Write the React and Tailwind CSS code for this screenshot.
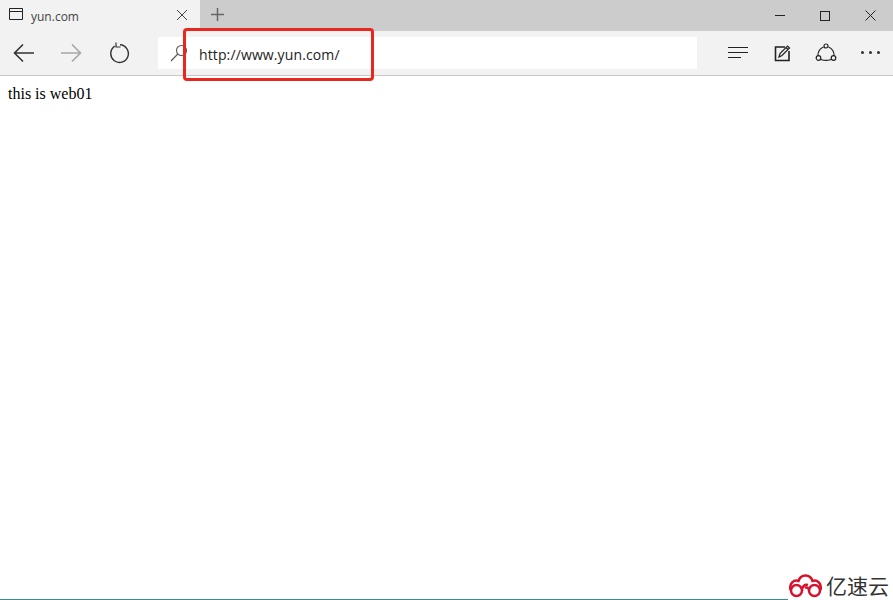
const Back = ({ color }) => (
  <svg width="22" height="20" viewBox="0 0 22 20" fill="none" stroke={color} strokeWidth="1.6">
    <path d="M1 10h20M10 1.500 1.500 10l8.500 8.500" />
  </svg>
);

const Forward = ({ color }) => (
  <svg width="22" height="20" viewBox="0 0 22 20" fill="none" stroke={color} strokeWidth="1.6">
    <path d="M1 10h20M12 1.500 20.500 10 12 18.500" />
  </svg>
);

const App = () => {
  return (
    <div className="relative h-[600px] w-[893px] overflow-hidden bg-white">
      {/* tab strip */}
      <div className="flex h-[31px] bg-[#cccccc]">
        <div className="flex w-[200px] items-center bg-[#f2f2f2] pl-[9px] pr-[12px]">
          <svg width="14" height="12" viewBox="0 0 14 12" fill="none" stroke="#222" strokeWidth="1" className="mb-[3px]">
            <path d="M.5.500h13v11H.5zM.5 3.500h13" />
          </svg>
          <span className="ml-[8px] mt-[2px] font-['Open_Sans',sans-serif] text-[12px] text-[#444]">yun.com</span>
          <svg width="12" height="12" viewBox="0 0 12 12" fill="none" stroke="#444" strokeWidth="1" className="ml-auto mb-[2px]">
            <path d="M1 1l10 10M11 1 1 11" />
          </svg>
        </div>
        <div className="flex w-[34px] items-center justify-center">
          <svg width="13" height="13" viewBox="0 0 13 13" fill="none" stroke="#666" strokeWidth="1.500" className="mb-[2px]">
            <path d="M6.500 0v13M0 6.500h13" />
          </svg>
        </div>
        <div className="ml-auto flex items-center">
          <div className="flex w-[45px] justify-center">
            <div className="h-px w-[10px] bg-[#222]" />
          </div>
          <div className="flex w-[46px] justify-center">
            <div className="h-[10px] w-[10px] border border-[#222]" />
          </div>
          <div className="flex w-[45px] justify-center">
            <svg width="11" height="11" viewBox="0 0 11 11" fill="none" stroke="#222" strokeWidth="1">
              <path d="M.5.500l10 10M10.500.500l-10 10" />
            </svg>
          </div>
        </div>
      </div>

      {/* toolbar */}
      <div className="flex h-[45px] items-center border-b border-[#c8c8c8] bg-[#f2f2f2] pb-[1px]">
        <div className="ml-[13px] flex items-center">
          <Back color="#333" />
        </div>
        <div className="ml-[25px] flex items-center">
          <Forward color="#a6a6a6" />
        </div>
        <svg width="22" height="22" viewBox="0 0 22 22" fill="none" stroke="#333" strokeWidth="1.400" className="ml-[27px]">
          <path d="M5.800 4.200a8.800 8.800 0 1 0 5.200-1.400" />
          <path d="M7 .5v4.500h4.500" strokeWidth="1.200" />
        </svg>
        <div className="ml-[27px] flex h-[32px] w-[539px] items-center bg-white pl-[12px]">
          <svg width="18" height="18" viewBox="0 0 18 18" fill="none" stroke="#555" strokeWidth="1.100">
            <circle cx="11.500" cy="6.500" r="5" />
            <path d="M7.800 10 1 17" />
          </svg>
          <span className="ml-[11px] mt-[4px] font-['Open_Sans',sans-serif] text-[14px] tracking-[0.12px] text-[#222]">http://www.yun.com/</span>
        </div>
        <div className="ml-[31px] flex w-[20px] flex-col gap-[4px]">
          <div className="h-px w-[20px] bg-[#222]" />
          <div className="h-px w-[20px] bg-[#222]" />
          <div className="h-px w-[13px] bg-[#222]" />
        </div>
        <svg width="18" height="18" viewBox="0 0 18 18" fill="none" stroke="#222" className="ml-[26px]">
          <path d="M11 3H1.500v13.500H15V7" strokeWidth="1.600" />
          <path d="M5 13l1-3.500L13.500 2l2 2L8 11.500z M12 3.500l2 2" strokeWidth="1.200" />
        </svg>
        <svg width="22" height="20" viewBox="0 0 22 20" fill="none" stroke="#222" strokeWidth="1.200" className="ml-[23px] mt-[1px]">
          <path d="M8.500 4C5 5.500 3 8.500 2.800 12.500M13.500 4C17 5.500 19 8.500 19.200 12.500M6 16.500c3.200 1.200 6.800 1.200 10 0" />
          <circle cx="11" cy="3" r="2" />
          <circle cx="3.500" cy="15" r="2.300" />
          <circle cx="18.500" cy="15" r="2.300" />
        </svg>
        <div className="ml-[24px] flex gap-[5px]">
          <div className="h-[3px] w-[3px] rounded-full bg-[#333]" />
          <div className="h-[3px] w-[3px] rounded-full bg-[#333]" />
          <div className="h-[3px] w-[3px] rounded-full bg-[#333]" />
        </div>
      </div>

      {/* page body */}
      <p className="ml-[8px] mt-[9px] font-['Liberation_Serif',serif] text-[16px] leading-[18px] text-black">this is web01</p>

      {/* red annotation */}
      <div className="absolute left-[183px] top-[28px] h-[53px] w-[191px] rounded-[4px] border-[3px] border-[#e8281f]" />

      {/* watermark */}
      <div className="absolute bottom-0 left-[788px] flex h-[30px] items-center gap-[3px]">
        <svg width="35" height="26" viewBox="0 0 35 26" fill="none" stroke="#d8112f" strokeWidth="2.500">
          <path d="M2.500 18C1 11 6 7.500 10.500 9 12.500 1.500 22.500 1.500 24.500 9 29 7.500 34 11 32.500 18" />
          <circle cx="8.500" cy="18.500" r="5.500" />
          <circle cx="26.500" cy="18.500" r="5.500" />
          <path d="M14 18.500C14 14 17 12 20 13M21 18.500C21 16 19 15 17 16" />
        </svg>
        <span className="font-['Noto_Sans_CJK_SC',sans-serif] text-[21px] leading-[30px] text-[#333]">亿速云</span>
      </div>
      <div className="absolute bottom-0 left-0 h-px w-[788px] bg-[#3f86a0]" />
    </div>
  );
};

export default App;
